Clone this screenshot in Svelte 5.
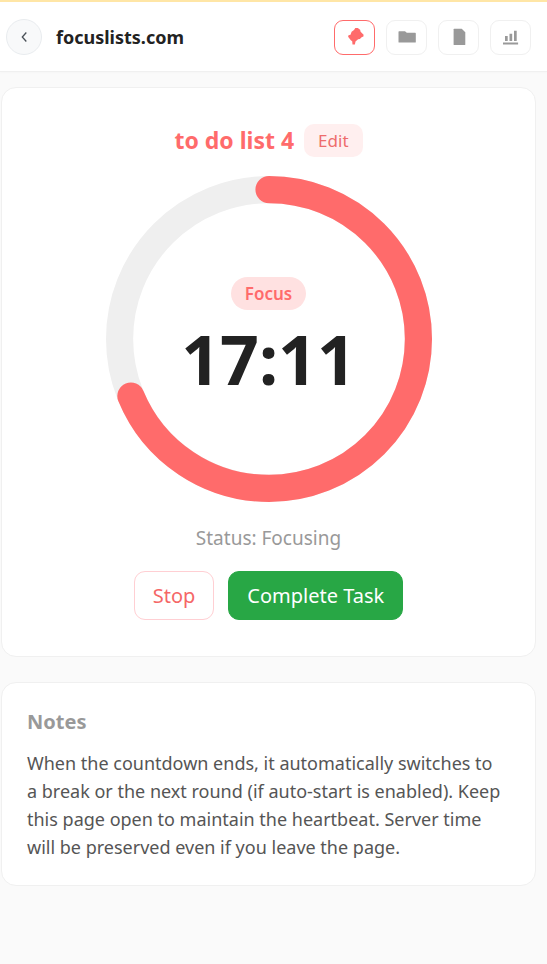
<script lang="ts">
  const total = 25 * 60;
  const radius = 55;
  const circumference = 2 * Math.PI * radius;

  let remaining = $state(17 * 60 + 11);
  let taskName = $state('to do list 4');
  let activeTab = $state('pin');

  let progress = $derived(remaining / total);
  let clock = $derived(
    `${String(Math.floor(remaining / 60)).padStart(2, '0')}:${String(remaining % 60).padStart(2, '0')}`
  );

  const tabs = [
    { id: 'pin', label: 'Focus' },
    { id: 'folder', label: 'Lists' },
    { id: 'file', label: 'Notes' },
    { id: 'chart', label: 'Statistics' },
  ];
</script>

<div class="page">
  <header class="topbar">
    <button type="button" class="back" aria-label="Back">
      <svg viewBox="0 0 12 12" width="12" height="12" aria-hidden="true">
        <path d="M8.3 1.5 4.3 6l4 4.5" fill="none" stroke="currentColor" stroke-width="1.3" />
      </svg>
    </button>
    <span class="site">focuslists.com</span>
    <nav class="tabs">
      {#each tabs as tab}
        <button
          type="button"
          class="tab"
          class:active={activeTab === tab.id}
          aria-label={tab.label}
          onclick={() => (activeTab = tab.id)}
        >
          <svg viewBox="0 0 20 20" width="20" height="20" fill="currentColor" aria-hidden="true">
            {#if tab.id === 'pin'}
              <path d="M10.3 1h2.5l2.3 1.7.5 2 3 3-.2 1.8-1.8.7-1.7 1.8-1.8.3-2.6 2.2-.6 2.9H7.5l-.3-3.2-1.4-1-2.7-3.4.4-1.6 2-.4 1.1-3 2.4-1.8z" />
            {:else if tab.id === 'folder'}
              <path d="M1.5 4.8q0-.6.6-.6H8l1.8 1.6h8.4q.6 0 .6.6v8.6q0 .6-.6.6H2.1q-.6 0-.6-.6z" />
            {:else if tab.id === 'file'}
              <path d="M5.3 1.7h7.4l3.6 3.5v12.2q0 .7-.7.7H5.3q-.7 0-.7-.7V2.4q0-.7.7-.7z" />
            {:else}
              <path d="M4 9h2.7v5H4zM8.5 6.7h2.7V14H8.5zM13 3.8h2.7V14H13zM2 15.6h15.1v1.8H2z" />
            {/if}
          </svg>
        </button>
      {/each}
    </nav>
  </header>

  <main>
    <section class="card timer">
      <div class="task">
        <h1>{taskName}</h1>
        <button type="button" class="edit">Edit</button>
      </div>

      <div class="dial">
        <svg class="ring" viewBox="0 0 120 120" aria-hidden="true">
          <circle class="track" cx="60" cy="60" r={radius} />
          <circle
            class="bar"
            cx="60"
            cy="60"
            r={radius}
            stroke-dasharray="{circumference * progress} {circumference}"
            transform="rotate(-90 60 60)"
          />
        </svg>
        <div class="readout">
          <span class="mode">Focus</span>
          <span class="clock">{clock}</span>
        </div>
      </div>

      <p class="status">Status: Focusing</p>

      <div class="actions">
        <button type="button" class="stop">Stop</button>
        <button type="button" class="complete">Complete Task</button>
      </div>
    </section>

    <section class="card notes">
      <h2>Notes</h2>
      <p>
        When the countdown ends, it automatically switches to a break or the next round (if
        auto-start is enabled). Keep this page open to maintain the heartbeat. Server time will be
        preserved even if you leave the page.
      </p>
    </section>
  </main>
</div>

<style>
  :global(body) {
    margin: 0;
    background: #fafafa;
  }

  .page {
    min-height: 100vh;
    box-sizing: border-box;
    border-top: 2px solid #ffe6a6;
    background: #fafafa;
    color: #222;
    font-family: 'Segoe UI', 'Noto Sans', 'Open Sans', sans-serif;
  }

  button {
    padding: 0;
    font-family: inherit;
    cursor: pointer;
  }

  .topbar {
    display: flex;
    align-items: center;
    padding: 17px 16px 16px 6px;
    background: #fff;
    border-bottom: 1px solid #f0f0f0;
    box-shadow: 0 1px 2px rgba(0, 0, 0, 0.02);
  }

  .back {
    display: grid;
    place-items: center;
    width: 36px;
    height: 36px;
    border: 1px solid #e9ecef;
    border-radius: 50%;
    background: #f8f9fa;
    color: #495057;
  }

  .site {
    margin-left: 14px;
    font-size: 18px;
    line-height: 26px;
    font-weight: 700;
  }

  .tabs {
    display: flex;
    gap: 11px;
    margin-left: auto;
  }

  .tab {
    display: grid;
    place-items: center;
    width: 41px;
    height: 35px;
    border: 1px solid #f0f0f0;
    border-radius: 9px;
    background: #fff;
    color: #999;
  }

  .tab.active {
    border-color: #ff6b6b;
    color: #ff6b6b;
  }

  main {
    display: flex;
    flex-direction: column;
    gap: 25px;
    padding: 15px 11px 24px 1px;
  }

  .card {
    border: 1px solid #f0f0f0;
    border-radius: 15px;
    background: #fff;
  }

  .timer {
    display: flex;
    flex-direction: column;
    align-items: center;
    padding: 36px 24px;
  }

  .task {
    display: flex;
    align-items: center;
    gap: 10px;
  }

  h1 {
    margin: 0;
    font-size: 23px;
    line-height: 33px;
    font-weight: 700;
    color: #ff6b6b;
  }

  .edit {
    height: 33px;
    padding: 0 14px;
    border: none;
    border-radius: 10px;
    background: #ffefef;
    color: #ee6c6c;
    font-size: 17px;
  }

  .dial {
    display: grid;
    width: 100%;
    max-width: 326px;
    margin-top: 19px;
  }

  .ring,
  .readout {
    grid-area: 1 / 1;
  }

  .ring {
    display: block;
    width: 100%;
  }

  .ring circle {
    fill: none;
    stroke-width: 10;
  }

  .track {
    stroke: #efefef;
  }

  .bar {
    stroke: #ff6b6b;
    stroke-linecap: round;
  }

  .readout {
    display: flex;
    flex-direction: column;
    align-items: center;
    justify-content: center;
    gap: 11px;
    padding-bottom: 4px;
  }

  .mode {
    padding: 0 14px;
    border-radius: 17px;
    background: #ffe1e1;
    color: #ff6b6b;
    font-size: 17px;
    line-height: 33px;
    font-weight: 600;
  }

  .clock {
    font-size: 68px;
    line-height: 76px;
    font-weight: 700;
  }

  .status {
    margin: 22px 0 0;
    color: #999;
    font-size: 19px;
    line-height: 28px;
  }

  .actions {
    display: flex;
    gap: 14px;
    margin-top: 19px;
  }

  .actions button {
    height: 49px;
    padding: 0 18px;
    border: 1px solid #28a745;
    border-radius: 11px;
    font-size: 20px;
    line-height: 28px;
  }

  .actions .stop {
    border-color: #ffcfd3;
    background: #fff;
    color: #f56767;
  }

  .actions .complete {
    background: #28a745;
    color: #fff;
  }

  .notes {
    padding: 24px 32px 24px 25px;
  }

  h2 {
    margin: 0 0 12px;
    color: #999;
    font-size: 20px;
    line-height: 30px;
    font-weight: 700;
  }

  .notes p {
    margin: 0;
    color: #555;
    font-size: 18px;
    line-height: 28px;
  }
</style>
